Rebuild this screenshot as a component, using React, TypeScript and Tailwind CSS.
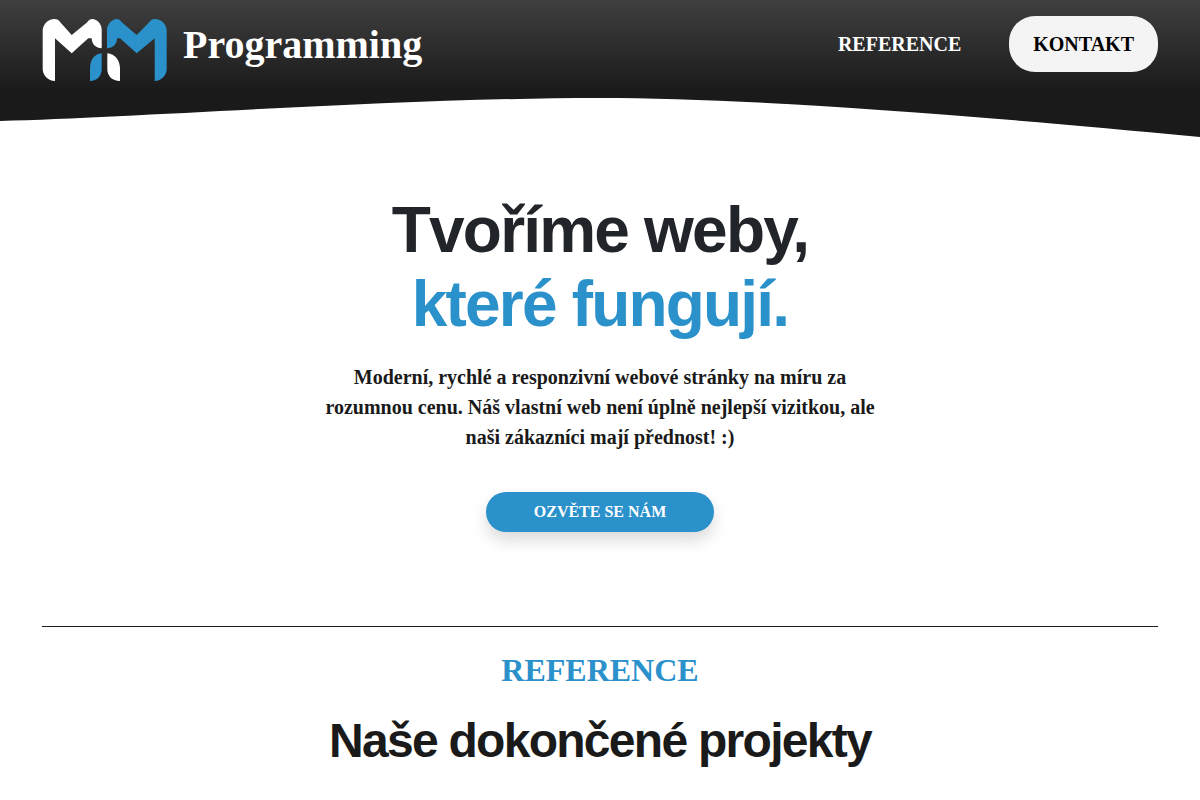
import React from "react";

const Logo = () => (
  <svg width="125" height="62" viewBox="0 0 125 62" className="shrink-0">
    {/* white M */}
    <path
      fill="#fff"
      d="M13 62C6 62 0.7 56 0.7 50V12C0.7 5 6 0 12.5 0C15 0 17 1 18.5 3.5L29.7 16L45 3.5C46.5 1.5 48 0 50 0C55.5 0 59.7 5 59.7 11V29.3C54 29.3 49.7 25 49.7 19.3L46.3 19.3L29.7 34.3L13 19.3V62Z"
    />
    {/* blue M */}
    <path
      fill="#2a91cb"
      d="M112.7 62C119.5 62 124.7 56 124.7 50V12C124.7 5 119.5 0 113 0C110.5 0 108.5 1 107 3.5L94.7 16L80 3.5C78.5 1.5 77 0 75 0C70 0 65 5 65 11V29.3C71 29.3 75 25 75 19.3L78 19.3L94.7 34.3L112.7 19.3V62Z"
    />
    <path fill="#2a91cb" d="M59.7 34.3V50C59.7 57 55 62 48 62V50C48 41 52 35 59.7 34.3Z" />
    <path fill="#fff" d="M65.3 34.3V50C65.3 57 70 62 78 62V50C78 41 73 35 65.3 34.3Z" />
  </svg>
);

export default function App() {
  return (
    <div className="min-h-[800px] overflow-hidden bg-white font-['Liberation_Serif',serif]">
      <header className="relative h-[138px] bg-[linear-gradient(180deg,#3f3f3f_0px,#1a1a1a_92px)]">
        <div className="flex items-start justify-between px-[42px] pt-4">
          <div className="flex items-center gap-4 pt-[3px]">
            <Logo />
            <span className="-mt-[10px] text-[40px] leading-[48px] font-bold text-white">Programming</span>
          </div>
          <nav className="flex items-center gap-12">
            <a className="text-[20px] font-bold text-white">REFERENCE</a>
            <a className="flex h-14 items-center rounded-[26px] bg-[#f4f4f4] px-6 text-[20px] font-bold text-black">
              KONTAKT
            </a>
          </nav>
        </div>
        <svg className="absolute inset-x-0 bottom-0" width="1200" height="41" viewBox="0 0 1200 41">
          <path fill="#fff" d="M0 24C150 20 400 1 600 1C740 1 950 16 1200 40V41H0Z" />
        </svg>
      </header>

      <main className="px-[42px]">
        <section className="flex flex-col items-center pt-[55px] text-center">
          <h1 className="font-['Liberation_Sans',sans-serif] text-[64px] leading-[74px] font-bold tracking-[-1.8px] text-[#212529]">
            Tvoříme weby,
            <br />
            <span className="text-[#2a91cb]">které fungují.</span>
          </h1>
          <p className="mt-[21px] w-[560px] text-[20px] leading-[30px] font-bold text-[#1a1a1a]">
            Moderní, rychlé a responzivní webové stránky na míru za rozumnou cenu. Náš vlastní web není úplně nejlepší
            vizitkou, ale naši zákazníci mají přednost! :)
          </p>
          <a className="mt-10 flex h-10 w-[228px] items-center justify-center rounded-[20px] bg-[#2a91cb] text-base font-bold text-white shadow-[0_8px_16px_rgba(0,0,0,0.15)]">
            OZVĚTE SE NÁM
          </a>
        </section>

        <section className="mt-[94px] border-t border-[#1a1a1a] text-center">
          <h2 className="mt-[23px] text-[32px] leading-10 font-bold text-[#2a91cb]">REFERENCE</h2>
          <h3 className="mt-[21px] font-['Liberation_Sans',sans-serif] text-[48px] leading-[60px] font-bold tracking-[-1.72px] text-[#1a1a1a]">
            Naše dokončené projekty
          </h3>
        </section>
      </main>
    </div>
  );
}
